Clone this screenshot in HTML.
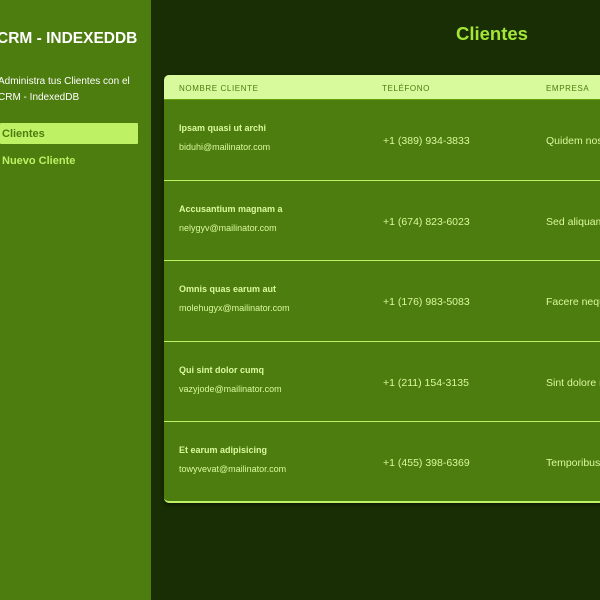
<!DOCTYPE html>
<html><head><meta charset="utf-8"><style>
*{margin:0;padding:0;box-sizing:border-box}
body{width:600px;height:600px;overflow:hidden;background:#1a2e05;font-family:"Liberation Sans",sans-serif;position:relative}
.side{position:absolute;left:0;top:0;width:151px;height:600px;background:#4d7c0f}
.t{position:absolute;white-space:nowrap}
.card{position:absolute;left:164px;top:75px;width:460px;height:428px;background:#4d7c0f;border-radius:5px;overflow:hidden;box-shadow:0 2px 4px rgba(0,0,0,.5);border-bottom:2px solid #bef264}
.head{position:absolute;left:0;top:0;width:100%;height:25px;background:#d9f99d;border-bottom:1px solid #65a30d}
.h{position:absolute;top:9px;font-size:8px;letter-spacing:.6px;color:#4d7c0f}
.row{position:absolute;left:0;width:100%;height:80.6px;border-bottom:1px solid #bef264}
.n{position:absolute;left:15px;top:23px;font-size:9px;font-weight:bold;color:#d9f99d}
.e{position:absolute;left:15px;top:42px;font-size:9px;color:#d9f99d}
.p{position:absolute;left:219px;top:35px;font-size:10.5px;color:#d9f99d}
.c{position:absolute;left:382px;top:35px;font-size:10.5px;color:#d9f99d;white-space:nowrap}
</style></head><body>
<div class="side">
<div class="t" style="left:-3px;top:30px;font-size:15.5px;font-weight:bold;color:#fff">CRM - INDEXEDDB</div>
<div class="t" style="left:-2px;top:74px;font-size:10px;line-height:16px;color:#fff">Administra tus Clientes con el<br>CRM - IndexedDB</div>
<div style="position:absolute;left:0;top:123px;width:138px;height:21px;background:#bef264;border-radius:1px"></div>
<div class="t" style="left:2px;top:128px;font-size:11px;font-weight:bold;color:#4d7c0f">Clientes</div>
<div class="t" style="left:2px;top:155px;font-size:11px;font-weight:bold;color:#bef264">Nuevo Cliente</div>
</div>
<div class="t" style="left:456px;top:23px;font-size:18.5px;font-weight:bold;color:#a3e635">Clientes</div>
<div class="card">
<div class="head"><span class="h" style="left:15px">NOMBRE CLIENTE</span><span class="h" style="left:218px">TELÉFONO</span><span class="h" style="left:382px">EMPRESA</span></div>
<div class="row" style="top:25px"><div class="n">Ipsam quasi ut archi</div><div class="e">biduhi@mailinator.com</div><div class="p">+1 (389) 934-3833</div><div class="c">Quidem nostrum</div></div>
<div class="row" style="top:105.6px"><div class="n">Accusantium magnam a</div><div class="e">nelygyv@mailinator.com</div><div class="p">+1 (674) 823-6023</div><div class="c">Sed aliquam</div></div>
<div class="row" style="top:186.2px"><div class="n">Omnis quas earum aut</div><div class="e">molehugyx@mailinator.com</div><div class="p">+1 (176) 983-5083</div><div class="c">Facere neque</div></div>
<div class="row" style="top:266.8px"><div class="n">Qui sint dolor cumq</div><div class="e">vazyjode@mailinator.com</div><div class="p">+1 (211) 154-3135</div><div class="c">Sint dolore non</div></div>
<div class="row" style="top:347.4px;border-bottom:none"><div class="n">Et earum adipisicing</div><div class="e">towyvevat@mailinator.com</div><div class="p">+1 (455) 398-6369</div><div class="c">Temporibus</div></div>
</div>
</body></html>
